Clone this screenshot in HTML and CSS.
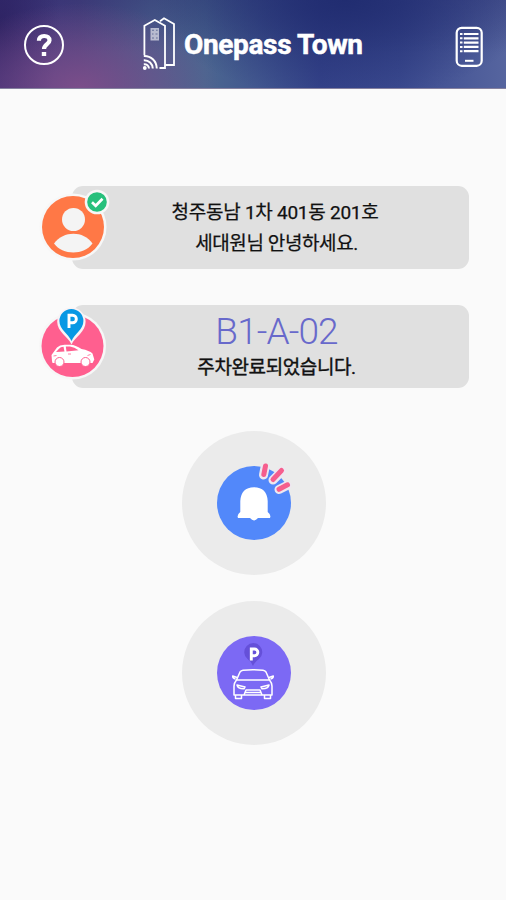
FILE: index.html
```html
<!DOCTYPE html>
<html lang="ko">
<head>
<meta charset="utf-8">
<title>Onepass Town</title>
<link rel="stylesheet" href="styles.css">
</head>
<body>
<header class="topbar">
  <svg class="help" viewBox="0 0 42 42" fill="none" stroke="#fff">
    <circle cx="21" cy="21" r="19" stroke-width="2"/>
    <path d="M15.900 16.800C16 13.400 18.100 12 21.200 12C24.400 12 26.500 13.700 26.500 16.400C26.500 20.100 21 20.200 21 25" stroke-width="4.200"/>
    <path d="M18.800 28h4.400v4h-4.400z" fill="#fff" stroke="none"/>
  </svg>
  <div class="brand">
    <svg class="brand-mark" viewBox="0 0 36 54" fill="none" stroke="#fff" stroke-width="1.800">
      <path d="M3.400 38V8.700L13.800 3L24 8.700V51H18.500"/>
      <path d="M19 4.200L23 1.300L33 7V48H24.500"/>
      <path d="M9.500 11h8.500v12.500H9.500z" fill="#fff" fill-opacity=".6" stroke="none"/>
      <path d="M11 13.200h2M15 13.200h1.700M11 17h1.500M14.500 17h2M11 21h2M15 21h1.700" stroke="#667199" stroke-width="1.100"/>
      <path d="M2.800 39C10 38.700 15.500 44 15.800 51.500M2.800 43.200C8 43 11.500 47 11.800 51.500M2.800 47.200C5.700 47 7.800 49 8 51.500" stroke-width="2"/>
      <circle cx="3.800" cy="51" r="1.900" fill="#fff" stroke="none"/>
    </svg>
    <h1 class="brand-name">Onepass Town</h1>
  </div>
  <svg class="phone" viewBox="0 0 30 42" fill="none" stroke="#fff">
    <rect x="2.700" y="1.800" width="25" height="38" rx="5" stroke-width="2.200"/>
    <path d="M6 8h2.500M6 12.300h2.500M6 16.600h2.500M6 20.900h2.500M6 25.200h2.500" stroke-width="2"/>
    <path d="M9.800 8H24.500M9.800 12.300H24.500M9.800 16.600H24.500M9.800 20.900H24.500M9.800 25.200H24.500" stroke-width="2.200"/>
    <path d="M11 34.800h8.500" stroke-width="2"/>
  </svg>
</header>
<main class="content">
  <section class="card">
    <svg class="badge" viewBox="0 0 76 84">
      <circle cx="36" cy="47" r="33.500" fill="#f7f7f7"/>
      <circle cx="36" cy="47" r="31" fill="#ff7846"/>
      <circle cx="36.500" cy="39.500" r="11.500" fill="#f4f4f4"/>
      <path d="M17 63.500C26.500 50.500 46.500 50.500 55.500 63.500C47 75.500 25.500 75.500 17 63.500Z" fill="#f4f4f4"/>
      <circle cx="60" cy="22" r="12.300" fill="#f7f7f7"/>
      <circle cx="60" cy="22" r="9.800" fill="#27c07c"/>
      <path d="M55 22.300l3.700 3.500l6.800-7" fill="none" stroke="#fff" stroke-width="2.700"/>
    </svg>
    <p class="message"><span class="home">청주동남 1차 401동 201호</span><span class="greeting">세대원님 안녕하세요.</span></p>
  </section>
  <section class="card">
    <svg class="badge" viewBox="0 0 76 84">
      <circle cx="35.500" cy="47" r="33.500" fill="#f7f7f7"/>
      <circle cx="35.500" cy="47" r="31" fill="#ff5f8f"/>
      <path d="M34.500 45.500C31 37.500 20.200 33 20.200 22.800A14.200 14.200 0 0 1 48.600 22.800C48.600 33 38.500 37.500 34.500 45.500Z" fill="#f9f3f6"/>
      <path d="M34.500 42C31.500 35 22.400 30.500 22.400 22A12 12 0 0 1 46.400 22C46.400 30.500 37.500 35 34.500 42Z" fill="#0898e4"/>
      <path d="M32 29V16.200H35.600A3.700 3.700 0 0 1 35.600 23.700H32.600" fill="none" stroke="#fff" stroke-width="2.900"/>
      <path d="M15 62L14.500 56L20 48.500Q22.500 46 27.500 45.800H33.500Q38.500 46 44.500 50Q52.500 51.500 55.500 54.500L57.300 60.500L55.500 64H15.500Z" fill="#fff"/>
      <path d="M19 53L22 49.700Q23.500 48 26.500 47.800L27.500 52.500ZM28.800 47.500H33Q37.500 48 41.500 51.300L29.500 52.500Z" fill="#ff5f8f"/>
      <path d="M31 55h3M16.500 57l3-.5M53.500 55.500l-3 1" stroke="#ff5f8f" stroke-width=".8"/>
      <g fill="#fff" stroke="#ff5f8f"><circle cx="22.500" cy="63" r="4.500"/><circle cx="48.500" cy="63" r="4.500"/></g>
    </svg>
    <p class="message"><span class="spot">B1-A-02</span><span class="parked">주차완료되었습니다.</span></p>
  </section>
  <nav class="actions">
    <button class="action" aria-label="알림">
      <svg viewBox="0 0 100 100">
        <circle cx="50" cy="50" r="37" fill="#5288fa"/>
        <path d="M34 65Q32.500 62 36.300 59V48Q37 34.500 50 34.200Q63 34.500 63.700 48V59Q67.500 62 66 65H54Q52 67.300 50 67.500Q48 67.300 46 65Z" fill="#fff"/>
        <path d="M61 14.500L59.500 22M78 18L69 27M83 32.500L75 36.500" stroke="#eee8f0" stroke-width="9" stroke-linecap="round"/>
        <path d="M61.500 13L59.800 21.500M77.500 17.500L69 26.500M83.500 31.800L75 36.300" stroke="#f65e8d" stroke-width="5" stroke-linecap="round"/>
      </svg>
    </button>
    <button class="action" aria-label="주차 위치">
      <svg viewBox="0 0 100 100">
        <circle cx="50" cy="50" r="37" fill="#7c69f4"/>
        <path d="M49 43Q47.500 38.500 43.500 36A9 9 0 1 1 55 36Q50.500 39 49 43Z" fill="#6550d9"/>
        <path d="M47.300 37.500V26H50.500A3.200 3.200 0 0 1 50.500 32.700H47.300" fill="none" stroke="#fff" stroke-width="2.900"/>
        <g fill="none" stroke="#fff" stroke-width="1.500" stroke-linejoin="round">
          <path d="M32.500 57L36 49Q37 47.500 39 47.300Q49 46.300 59 47.300Q61 47.500 62 49L65.500 57Z"/>
          <path d="M32.500 57Q30 60 30 63V72H68V63Q68 60 65.500 57M33 54.500L28.700 53Q28.500 55.500 31.500 56M65 54.500L69.300 53Q69.500 55.500 66.500 56"/>
          <path d="M31.500 72v3.500h6V72M60.500 72v3.500h6V72M33 62q1 4 7 3.800l1-1.800zM65 62q-1 4-7 3.800l-1-1.800zM41 69.500h16M40 72l2-5h14l2 5"/>
        </g>
      </svg>
    </button>
  </nav>
</main>
</body>
</html>
```

FILE: styles.css
```css
* { box-sizing: border-box; }
body {
  margin: 0;
  min-height: 900px;
  background: #fafafa;
  color: #111;
  font-family: Roboto, "Noto Sans CJK KR", sans-serif;
}
.topbar {
  display: flex;
  align-items: center;
  height: 89px;
  padding: 2px 22px 0 23px;
  border-bottom: 1px solid #85819f;
  background:
    radial-gradient(ellipse 140px 85px at 80px 100%, rgba(132, 80, 140, .85), rgba(110, 75, 140, 0)),
    radial-gradient(ellipse 60px 120px at 0 30%, rgba(40, 30, 90, .7), rgba(60, 50, 125, 0)),
    radial-gradient(ellipse 190px 100px at 345px 0, rgba(32, 44, 112, .95), rgba(45, 55, 130, 0)),
    linear-gradient(180deg, rgba(30, 34, 100, .3), rgba(30, 34, 100, 0) 60%),
    linear-gradient(90deg, #44347f 0, #48427f 80px, #4b5c8c 150px, #4b6690 205px, #41568f 260px, #35438a 320px, #3b4a8f 400px, #56659f 506px);
}
.help { width: 42px; height: 42px; }
.brand { display: flex; align-items: center; gap: 7px; margin: 0 auto 0 76px; }
.brand-mark { width: 36px; height: 54px; margin-top: -2px; }
.brand-name {
  margin: 0;
  color: #fff;
  font-size: 28px;
  font-weight: 700;
  line-height: 34px;
  letter-spacing: -.35px;
  -webkit-text-stroke: .5px #fff;
  white-space: nowrap;
}
.phone { width: 30px; height: 42px; margin-top: 3px; }
.content {
  display: flex;
  flex-direction: column;
  gap: 36px;
  padding: 97px 37px 0 72px;
}
.card {
  position: relative;
  height: 83px;
  padding-top: 11px;
  border-radius: 11px;
  background: #e0e0e0;
}
.badge { position: absolute; left: -35px; top: -6px; width: 76px; height: 84px; }
.message {
  display: flex;
  flex-direction: column;
  align-items: center;
  margin: 0 0 0 9px;
  text-align: center;
  white-space: nowrap;
}
.message span { font-size: 19px; line-height: 31px; -webkit-text-stroke: .25px currentColor; }
.message .home { letter-spacing: -.25px; }
.message .spot {
  color: #6869cb;
  font-size: 37px;
  font-weight: 300;
  line-height: 31px;
  letter-spacing: -.9px;
  margin-left: 3px;
  -webkit-text-stroke: 0;
}
.message .parked { line-height: 42px; letter-spacing: -.4px; margin-left: 3px; -webkit-text-stroke: .4px currentColor; }
.message .greeting { letter-spacing: -.4px; margin-left: 3px; }
.actions {
  display: flex;
  flex-direction: column;
  align-items: center;
  gap: 26px;
  width: 144px;
  margin: 7px 0 0 110px;
}
.action {
  display: grid;
  place-items: center;
  width: 144px;
  height: 144px;
  padding: 0;
  border: 0;
  border-radius: 50%;
  background: #ebebeb;
}
.action svg { width: 100px; height: 100px; }
```
